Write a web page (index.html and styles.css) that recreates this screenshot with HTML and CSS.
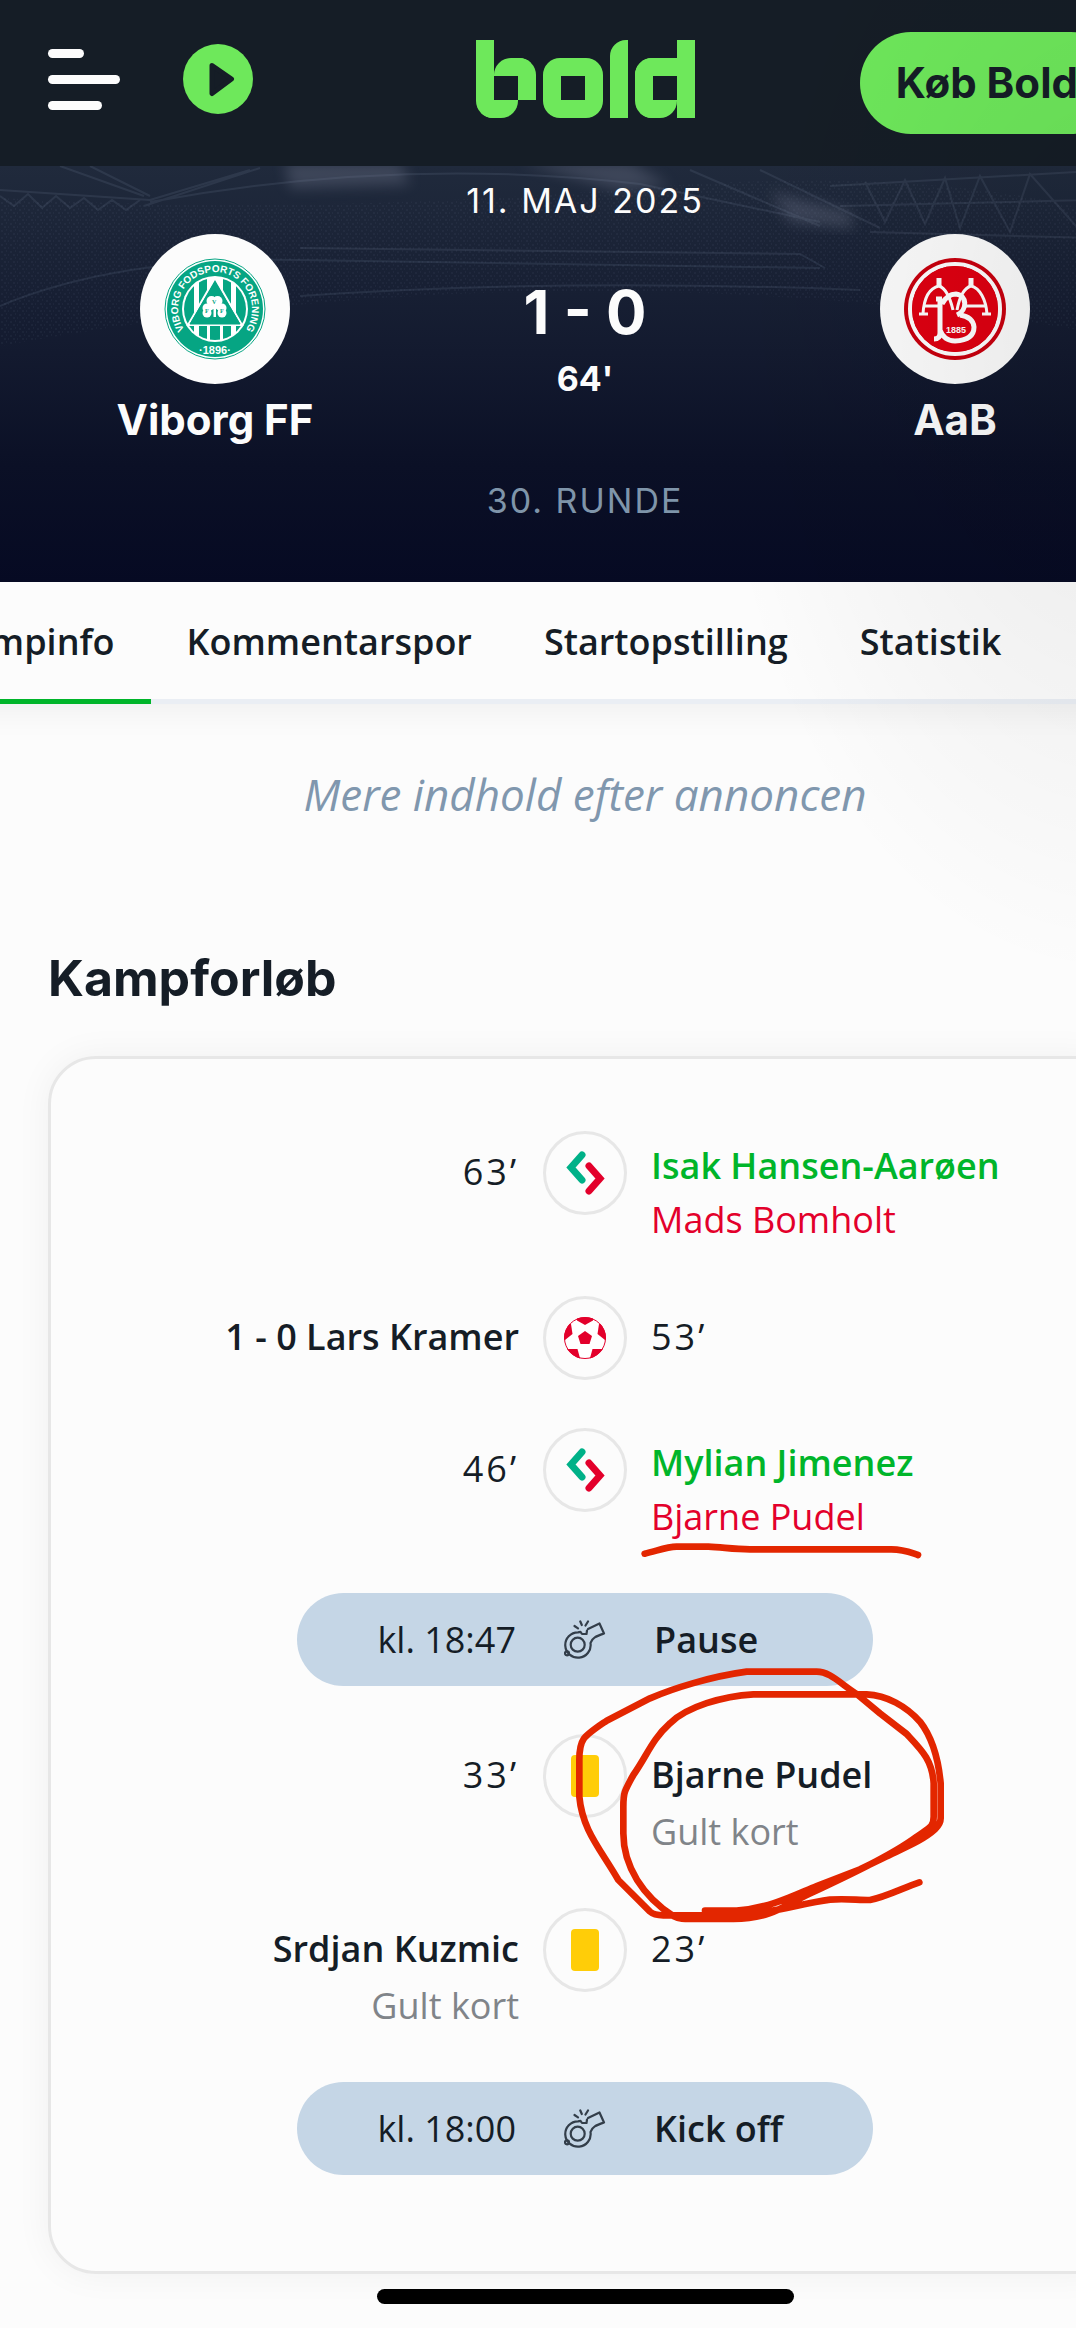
FILE: index.html
```html
<!DOCTYPE html>
<html lang="da">
<head>
  <meta charset="UTF-8">
  <meta name="viewport" content="width=device-width, initial-scale=1.0">
  <title>Viborg FF - AaB | bold</title>
  <link rel="stylesheet" href="styles.css">
</head>
<body>
  <!-- shared icons -->
  <svg class="sprite" aria-hidden="true">
    <symbol id="icon-swap" viewBox="3 3 78 78">
      <g fill="none" stroke-width="7" stroke-linecap="round" stroke-linejoin="miter">
        <path d="M39 24 28 36.500 39 49" stroke="#00b188"/>
        <path d="M46 35 57 47.500 46 60" stroke="#e3002b"/>
      </g>
    </symbol>
    <symbol id="icon-ball" viewBox="3 3 78 78">
      <clipPath id="ball-clip"><circle cx="42" cy="42" r="21"/></clipPath>
      <circle cx="42" cy="42" r="20.500" fill="#fff" stroke="#e3002b"/>
      <g fill="#e3002b" clip-path="url(#ball-clip)">
        <path d="M42 35 49 40 46.500 48H37.500L35 40Z"/>
        <path d="M34 20H50V24.500L42 29 34 24.500Z"/>
        <path d="M19 44V26L28 28 29.500 38 22 44Z"/>
        <path d="M65 44V26L56 28 54.500 38 62 44Z"/>
        <path d="M24 53H34.500L37.500 64H24Z"/>
        <path d="M60 53H49.500L46.500 64H60Z"/>
      </g>
    </symbol>
    <symbol id="icon-card" viewBox="3 3 78 78">
      <rect x="28" y="21" width="28" height="42" rx="4" fill="#ffcd08"/>
    </symbol>
    <symbol id="icon-whistle" viewBox="0 0 42 40">
      <g fill="none" stroke="#333e4a" stroke-width="2.200" stroke-linecap="round" stroke-linejoin="round">
        <circle cx="13.700" cy="24.700" r="7"/>
        <path d="M24 9 35.500 3.500 40 13.500C33 16 28 17.500 26.500 23A12.700 12.700 0 1 1 14 12.300L16.500 11.800 18 14H22.500L23 10.500"/>
        <circle cx="3" cy="33.300" r="2"/>
        <path d="M14 8.300 10.500 6M17.800 5 16.300 1.500M21.500 5.500 24 1.500"/>
      </g>
    </symbol>
  </svg>

  <div class="page">
    <header class="topbar">
      <div class="topbar-left">
        <button type="button" class="menu-btn" aria-label="Menu">
          <span class="bar bar-short"></span>
          <span class="bar"></span>
          <span class="bar bar-mid"></span>
        </button>
        <button type="button" class="play-btn" aria-label="Afspil">
          <svg viewBox="0 0 70 70" width="70" height="70">
            <circle cx="35" cy="35" r="35" fill="#6ee85b"/>
            <path d="M29 21.500 48.500 35 29 49.500Z" fill="#151d26" stroke="#151d26" stroke-width="5" stroke-linejoin="round"/>
          </svg>
        </button>
      </div>
      <a href="#" class="logo" aria-label="bold">
        <span class="logo-b"><i class="b-stem"></i><i class="b-bowl"></i></span>
        <span class="logo-o"></span>
        <span class="logo-l"></span>
        <span class="logo-d"><i class="d-bowl"></i><i class="d-stem"></i></span>
      </a>
      <a href="#" class="buy-btn">Køb Bold</a>
    </header>

    <section class="hero">
      <svg class="stadium" viewBox="0 0 1170 416" preserveAspectRatio="none" aria-hidden="true">
        <defs>
          <filter id="soft"><feGaussianBlur stdDeviation="7"/></filter>
          <pattern id="crowd" width="9" height="7" patternUnits="userSpaceOnUse">
            <path d="M1 2h2M6 1h1M4 5h2M8 5h1" stroke="#7b89a5" stroke-width="1"/>
          </pattern>
        </defs>
        <g fill="#6c7287" filter="url(#soft)" opacity=".4">
          <path d="M285-4H400L410 18 290 22Z"/>
          <path d="M520-4H630L670 20 620 24Z"/>
          <path d="M770 26 850 46 855 62 790 56Z"/>
        </g>
        <path d="M0 32Q300 50 640 22T1170 70V180Q600 70 0 180Z" fill="url(#crowd)" opacity=".14"/>
        <g fill="none" stroke="#78869f" stroke-width="2" opacity=".16">
          <path d="M0 24 150 34 250 4M60 0 144 30M90 0 150 30M144 40 260 2M150 36Q400-10 640 18L820 56"/>
          <path d="M830 20 1076 6M840 40 1170 32M870 66 1170 74M690 4 820 60M760 4 880 62"/>
          <path d="M865 16 885 56 905 14 925 58 945 12 960 62 980 10 1010 66 1030 8 1076 60"/>
          <path d="M0 30 14 40 28 28 42 42 56 30 70 42 84 32 98 44 112 34 126 44 140 34"/>
          <path d="M300 82 800 88 825 102M0 140Q120 90 300 94L820 102M300 130Q560 112 860 124"/>
        </g>
      </svg>
      <div class="match">
        <div class="team">
          <span class="crest">
            <svg viewBox="0 0 102 102" width="102" height="102" role="img" aria-label="Viborg FF">
              <defs>
                <path id="vff-circle" d="M27.200 79.300A37 37 0 1 1 74.800 79.300"/>
                <clipPath id="vff-clip"><circle cx="51" cy="51" r="31"/></clipPath>
              </defs>
              <circle cx="51" cy="51" r="50" fill="#fff" stroke="#06a583"/>
              <circle cx="51" cy="51" r="48" fill="#06a583"/>
              <circle cx="51" cy="51" r="33" fill="#fff"/>
              <g clip-path="url(#vff-clip)">
                <path d="M19 20H30V82H19ZM35 20H43V82H35ZM59 20H67V82H59ZM72 20H83V82H72ZM46 68H56V82H46Z" fill="#06a583"/>
              </g>
              <path d="M51 20 78 67H24Z" fill="#06a583" stroke="#fff" stroke-width="2"/>
              <path d="M51 24 76 66H26Z" fill="none" stroke="#06a583"/>
              <g fill="#fff">
                <circle cx="47.500" cy="43" r="5"/><circle cx="53.500" cy="43" r="5"/>
                <circle cx="43" cy="50" r="4.500"/><circle cx="43" cy="55" r="4.500"/>
                <circle cx="58" cy="50" r="4.500"/><circle cx="58" cy="55" r="4.500"/>
                <path d="M46 44H55L58 55 51 50 43 55ZM49.500 50H52V59H49.500Z"/>
              </g>
              <g class="crest-mark" fill="#06a583" font-size="6">
                <text x="48" y="46">V</text><text x="41" y="55">F</text><text x="56" y="55">F</text>
              </g>
              <g class="crest-text" fill="#fff">
                <text font-size="10"><textPath href="#vff-circle" startOffset="50%" text-anchor="middle">VIBORG FODSPORTS FORENING</textPath></text>
                <text x="51" y="96" font-size="11" text-anchor="middle">·1896·</text>
              </g>
            </svg>
          </span>
          <h2 class="team-name">Viborg FF</h2>
        </div>
        <div class="score">
          <p class="meta">11. MAJ 2025</p>
          <p class="result">1 - 0</p>
          <p class="minute">64'</p>
          <p class="meta meta-round">30. RUNDE</p>
        </div>
        <div class="team">
          <span class="crest">
            <svg viewBox="0 0 102 102" width="102" height="102" role="img" aria-label="AaB">
              <circle cx="51" cy="51" r="51" fill="#c9000e"/>
              <circle cx="51" cy="51" r="45" fill="none" stroke="#fff" stroke-width="4"/>
              <circle cx="51" cy="51" r="43" fill="#df0011"/>
              <g fill="none" stroke="#fff" stroke-width="3">
                <path d="M19 56C20 39 26 30 35 28Q44 31 49 52M53 52Q57 31 67 28C76 30 82 42 83 56M15 56H24M78 56H87M21 48H34M62 48H81"/>
                <path d="M35 20V29M67 20V29" stroke-width="5"/>
                <path d="M36 42V75Q36 81 30 81M32 41H38M36 72Q40 83 51 83 70 82 70 69 69 59 56 57M38 46Q43 36 52 36C63 37 64 52 53 57" stroke-width="5"/>
              </g>
              <text class="crest-text" x="52" y="75" font-size="9" text-anchor="middle" fill="#fff">1885</text>
            </svg>
          </span>
          <h2 class="team-name">AaB</h2>
        </div>
      </div>
    </section>

    <nav class="tabs">
      <a href="#" class="tab active">Kampinfo</a>
      <a href="#" class="tab">Kommentarspor</a>
      <a href="#" class="tab">Startopstilling</a>
      <a href="#" class="tab">Statistik</a>
    </nav>

    <main>
      <p class="ad-note">Mere indhold efter annoncen</p>
      <h1>Kampforløb</h1>

      <div class="card">
        <ol class="events">
          <li class="event event-sub">
            <div class="left"><span class="time">63’</span></div>
            <span class="icon"><svg><use href="#icon-swap"/></svg></span>
            <div class="right"><p class="player in">Isak Hansen-Aarøen</p><p class="out">Mads Bomholt</p></div>
          </li>
          <li class="event">
            <div class="left"><p class="player">1 - 0 Lars Kramer</p></div>
            <span class="icon"><svg><use href="#icon-ball"/></svg></span>
            <div class="right"><span class="time">53’</span></div>
          </li>
          <li class="event event-sub">
            <div class="left"><span class="time">46’</span></div>
            <span class="icon"><svg><use href="#icon-swap"/></svg></span>
            <div class="right"><p class="player in">Mylian Jimenez</p><p class="out">Bjarne Pudel</p></div>
          </li>
          <li class="period">
            <span class="left">kl. 18:47</span>
            <svg class="whistle"><use href="#icon-whistle"/></svg>
            <span class="player">Pause</span>
          </li>
          <li class="event event-card">
            <div class="left"><span class="time">33’</span></div>
            <span class="icon"><svg><use href="#icon-card"/></svg></span>
            <div class="right"><p class="player">Bjarne Pudel</p><p class="note">Gult kort</p></div>
          </li>
          <li class="event event-card">
            <div class="left"><p class="player">Srdjan Kuzmic</p><p class="note">Gult kort</p></div>
            <span class="icon"><svg><use href="#icon-card"/></svg></span>
            <div class="right"><span class="time">23’</span></div>
          </li>
          <li class="period">
            <span class="left">kl. 18:00</span>
            <svg class="whistle"><use href="#icon-whistle"/></svg>
            <span class="player">Kick off</span>
          </li>
        </ol>

        <!-- red pen marks -->
        <svg class="marks" viewBox="0 0 1200 1260" aria-hidden="true">
          <g fill="none" stroke="#e32600" stroke-width="20" stroke-linecap="round" stroke-linejoin="round">
            <path d="M224 101C260 93 290 80 320 80H415C460 82 490 88 540 88H960C1000 87 1020 97 1044 105"/>
            <path d="M405 1172H500C600 1165 680 1122 740 1098L870 1048 940 1014C1010 980 1060 960 1095 928Q1112 912 1112 895V790C1105 715 1085 650 1050 605 1010 560 950 525 890 523H550C460 528 350 560 300 610 245 660 235 700 190 765 162 815 160 820 160 860V940C160 1040 220 1130 310 1188 330 1198 345 1197 370 1197H490C600 1195 640 1160 700 1130 800 1083 960 1010 1040 950 1080 922 1091 920 1091 890V790C1087 720 1055 690 1010 642L930 580 860 522C810 490 780 455 740 455H530C420 470 310 505 240 535L110 602C40 650 28 655 28 720V830C37 930 90 985 145 1080L240 1175Q252 1186 280 1186H520C640 1170 700 1150 780 1139 820 1135 860 1140 900 1140 950 1130 1000 1103 1048 1087"/>
          </g>
        </svg>
      </div>
    </main>

    <div class="home-bar"></div>
  </div>
</body>
</html>
```
FILE: styles.css
```css
* {
  box-sizing: border-box;
}
body {
  margin: 0;
  background-color: #fcfcfc;
  color: #151d26;
  font-family: "Open Sans", sans-serif;
  font-size: 36px;
  overflow-x: hidden;
}
p, h1, h2 {
  margin: 0;
}
a {
  color: inherit;
  text-decoration: none;
}
button {
  padding: 0;
  border: none;
  background: none;
  cursor: pointer;
}
.sprite {
  position: absolute;
  width: 0;
  height: 0;
}
/* the page is wider than the window and runs off the right edge */
.page {
  position: relative;
  margin-right: -94px;
}
.page::after {
  content: "";
  position: absolute;
  inset: 0;
  pointer-events: none;
  background: radial-gradient(400px 640px at calc(100% - 60px) 340px, rgba(0, 0, 0, 0.08), transparent);
}

/* top bar */
.topbar {
  display: grid;
  grid-template-columns: 1fr auto 1fr;
  align-items: center;
  height: 166px;
  padding: 0 48px;
  background-color: #151d26;
}
.topbar-left {
  display: flex;
  align-items: center;
  gap: 63px;
  margin-bottom: 8px;
}
.menu-btn {
  display: flex;
  flex-direction: column;
  gap: 17px;
}
.bar {
  width: 72px;
  height: 9px;
  border-radius: 5px;
  background-color: #fcfcfc;
}
.bar-short {
  width: 36px;
}
.bar-mid {
  width: 54px;
}
.play-btn svg {
  display: block;
}
.logo {
  display: flex;
  align-items: flex-end;
  gap: 7px;
  margin-bottom: 8px;
}
.logo-b, .logo-d {
  display: grid;
  grid-template-columns: 18px 24px 18px;
  grid-template-rows: 18px 42px 18px;
}
.logo i {
  border: 0 solid #6ee85b;
}
.b-stem {
  grid-area: 1 / 1 / 4 / 3;
}
.logo .b-stem {
  border-width: 0 0 18px 18px;
  border-radius: 0 0 17px 17px;
}
.b-bowl {
  grid-area: 2 / 2 / 3 / 4;
}
.logo .b-bowl {
  border-width: 18px 18px 0 0;
  border-radius: 17px 17px 0 0;
}
.logo-o {
  width: 60px;
  height: 60px;
  border: 18px solid #6ee85b;
  border-radius: 17px;
}
.logo-l {
  width: 18px;
  height: 78px;
  border-radius: 16px 0 0 0;
  background-color: #6ee85b;
}
.d-bowl {
  grid-area: 2 / 1 / 4 / 3;
}
.logo .d-bowl {
  border-width: 18px 0 18px 18px;
  border-radius: 17px 0 17px 17px;
}
.d-stem {
  grid-area: 1 / 3 / 4 / 4;
  background-color: #6ee85b;
}
.buy-btn {
  justify-self: end;
  padding: 0 44px 0 36px;
  border-radius: 51px;
  background-color: #6ee85b;
  font-family: Inter, sans-serif;
  font-size: 42px;
  font-weight: 700;
  line-height: 102px;
  white-space: nowrap;
}

/* match header */
.hero {
  position: relative;
  padding: 0 30px 54px;
  background: linear-gradient(#202a3c, #131a2f 45%, #0b1026 72%, #060a23);
  color: #fcfcfc;
  font-family: Inter, sans-serif;
  text-align: center;
}
.stadium {
  position: absolute;
  inset: 0;
  width: 100%;
  height: 100%;
}
.match {
  position: relative;
  display: grid;
  grid-template-columns: repeat(3, 1fr);
}
.team {
  display: flex;
  flex-direction: column;
  align-items: center;
  padding-top: 68px;
}
.crest {
  display: flex;
  align-items: center;
  justify-content: center;
  width: 150px;
  height: 150px;
  border-radius: 50%;
  background-color: #fcfcfc;
}
.crest-text {
  font-family: "Liberation Sans", sans-serif;
  font-weight: 700;
}
.crest-mark {
  font-family: "Liberation Serif", serif;
  font-weight: 700;
}
.team-name {
  margin-top: 9px;
  font-size: 42px;
  line-height: 54px;
}
.meta {
  padding-top: 8px;
  font-size: 34px;
  font-weight: 400;
  letter-spacing: 2px;
  line-height: 54px;
}
.result {
  margin-top: 48px;
  font-size: 60px;
  font-weight: 700;
  line-height: 72px;
}
.minute {
  margin-top: 4px;
  font-size: 34px;
  font-weight: 700;
  line-height: 54px;
}
.meta-round {
  margin-top: 60px;
  color: #7f95aa;
}

/* tabs */
.tabs {
  display: flex;
  margin-left: -90px;
  border-bottom: 5px solid #eaeef4;
  box-shadow: 0 9px 30px rgba(0, 0, 0, 0.05);
}
.tab {
  padding: 33px 36px 30px;
  margin-bottom: -5px;
  border-bottom: 5px solid transparent;
  font-size: 36px;
  font-weight: 600;
  line-height: 54px;
}
.tab.active {
  border-bottom-color: #00b52a;
}

main {
  padding: 0 48px;
}
.ad-note {
  padding-top: 60px;
  color: #8097ae;
  font-size: 44px;
  font-style: italic;
  line-height: 60px;
  text-align: center;
}
h1 {
  margin-top: 124px;
  font-family: Inter, sans-serif;
  font-size: 50px;
  font-weight: 700;
  line-height: 60px;
}

/* timeline */
.card {
  position: relative;
  margin-top: 48px;
  padding: 72px 0 96px;
  border: 3px solid #e7e7e7;
  border-radius: 48px;
  box-shadow: 0 0 36px rgba(0, 0, 0, 0.05);
}
.events {
  display: flex;
  flex-direction: column;
  gap: 48px;
  margin: 0;
  padding: 0;
  list-style: none;
}
.event {
  display: grid;
  grid-template-columns: 1fr 84px 1fr;
  column-gap: 24px;
  height: 84px;
  line-height: 57px;
}
.event-sub {
  height: 117px;
}
.event-card {
  height: 126px;
}
.event .left, .event .right {
  padding-top: 12px;
}
.event-sub .right {
  padding-top: 8px;
  line-height: 54px;
}
.left {
  text-align: right;
}
.icon {
  height: 84px;
  border: 3px solid #e7e7e7;
  border-radius: 50%;
}
.icon svg {
  display: block;
  width: 78px;
  height: 78px;
}
.time {
  letter-spacing: 3px;
}
.player {
  font-weight: 600;
}
.in {
  color: #00b52a;
}
.out {
  color: #e3002b;
}
.note {
  color: #808489;
}
.period {
  display: grid;
  grid-template-columns: 1fr 42px 1fr;
  column-gap: 48px;
  align-items: center;
  align-self: center;
  width: 576px;
  border-radius: 47px;
  background-color: #c5d6e6;
  line-height: 93px;
}
.whistle {
  width: 42px;
  height: 40px;
}
.marks {
  position: absolute;
  top: 461px;
  left: calc(50% - 15px);
  width: 400px;
  height: 420px;
  pointer-events: none;
}

.home-bar {
  width: 417px;
  height: 15px;
  margin: 15px auto 24px;
  border-radius: 8px;
  background-color: #000;
}
```
